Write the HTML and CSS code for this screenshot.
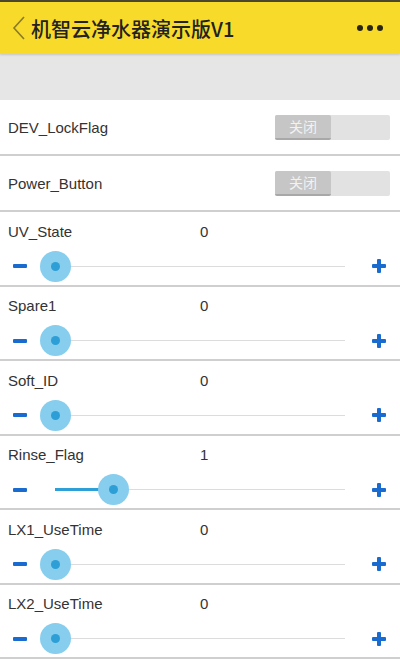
FILE: index.html
```html
<!DOCTYPE html>
<html lang="zh-CN">
<head>
  <meta charset="UTF-8" />
  <meta name="viewport" content="width=device-width, initial-scale=1.0" />
  <title>机智云净水器演示版V1</title>
  <link rel="stylesheet" href="styles.css">
</head>
<body>
  <div class="header">
    <svg class="back" width="14" height="26" viewBox="0 0 14 26">
      <path d="M12 2 L2 13 L12 24" fill="none" stroke="#8a7a2a" stroke-width="1.6" />
    </svg>
    <h1>机智云净水器演示版V1</h1>
    <div class="more"><span></span><span></span><span></span></div>
  </div>
  <div class="gap"></div>

  <div class="list">
    <div class="row toggle-row">
      <span class="label">DEV_LockFlag</span>
      <div class="switch"><span class="knob">关闭</span></div>
    </div>
    <div class="row toggle-row">
      <span class="label">Power_Button</span>
      <div class="switch"><span class="knob">关闭</span></div>
    </div>
  </div>

  <div class="list" id="sliders"></div>

  <script>
    const items = [
      ["UV_State", 0], ["Spare1", 0], ["Soft_ID", 0],
      ["Rinse_Flag", 1], ["LX1_UseTime", 0], ["LX2_UseTime", 0]
    ];
    const max = 5;
    const box = document.getElementById("sliders");
    items.forEach(([name, val]) => {
      const pct = (val / max) * 100;
      const row = document.createElement("div");
      row.className = "row slider-row";
      row.innerHTML = `
        <div class="top"><span class="label">${name}</span><span class="value">${val}</span></div>
        <div class="ctrl">
          <span class="minus"></span>
          <div class="track">
            <div class="fill" style="width:${pct}%"></div>
            <div class="thumb" style="left:${pct}%"></div>
          </div>
          <span class="plus"></span>
        </div>`;
      box.appendChild(row);
    });
  </script>
</body>
</html>
```

FILE: styles.css
```css
* {
  box-sizing: border-box;
}
body {
  margin: 0;
  background: #fff;
  font-family: 'Liberation Sans', Arial, 'Noto Sans CJK SC', sans-serif;
  color: #333;
}
.header {
  height: 54px;
  border-top: 2px solid #4a4630;
  background: #f7da2a;
  display: flex;
  align-items: center;
  padding: 0 17px 0 12px;
  box-shadow: 0 1px 2px rgba(0,0,0,0.15);
  position: relative;
}
.back {
  margin-right: 5px;
}
.header h1 {
  margin: 0;
  flex: 1;
  font-family: 'Noto Sans CJK SC', sans-serif;
  font-size: 20px;
  font-weight: 500;
  color: #222;
}
.more {
  display: flex;
  gap: 4px;
}
.more span {
  width: 6px;
  height: 6px;
  border-radius: 50%;
  background: #2a2510;
}
.gap {
  height: 46px;
  background: #e6e6e6;
}
.row {
  border-bottom: 2px solid #cfcfcf;
  padding: 0 8px;
}
.label {
  font-size: 15px;
  color: #333;
}
.toggle-row {
  height: 56px;
  display: flex;
  align-items: center;
  justify-content: space-between;
  padding-right: 10px;
}
.switch {
  width: 115px;
  height: 25px;
  background: #e2e2e2;
  border-radius: 2px;
  display: flex;
}
.knob {
  width: 56px;
  height: 25px;
  background: #c6c6c6;
  border-bottom: 2px solid #a8a8a8;
  border-radius: 2px;
  color: #f2f2f2;
  font-family: 'Noto Sans CJK SC', sans-serif;
  font-size: 14px;
  display: flex;
  align-items: center;
  justify-content: center;
}
.slider-row {
  height: 74.5px;
  padding-top: 9px;
}
.top {
  display: flex;
  height: 20px;
  align-items: center;
}
.top .label {
  width: 192px;
}
.value {
  font-size: 15px;
}
.ctrl {
  display: flex;
  align-items: center;
  height: 32px;
  margin-top: 9px;
}
.minus {
  width: 14px;
  height: 4px;
  background: #1a6bd0;
  border-radius: 1px;
  margin-left: 5px;
}
.track {
  position: relative;
  height: 1px;
  background: #dcdcdc;
  margin-left: 28px;
  width: 290px;
}
.fill {
  position: absolute;
  left: 0;
  top: -1px;
  height: 3px;
  background: #2f9fd8;
}
.thumb {
  position: absolute;
  top: 0;
  width: 31px;
  height: 31px;
  margin: -15px 0 0 -15px;
  border-radius: 50%;
  background: #86cdee;
}
.thumb::after {
  content: "";
  position: absolute;
  left: 11px;
  top: 11px;
  width: 9px;
  height: 9px;
  border-radius: 50%;
  background: #2d9fd6;
}
.plus {
  position: relative;
  width: 14px;
  height: 14px;
  margin-left: 27px;
}
.plus::before, .plus::after {
  content: "";
  position: absolute;
  background: #1a6bd0;
  border-radius: 1px;
}
.plus::before {
  left: 0;
  top: 5px;
  width: 14px;
  height: 4px;
}
.plus::after {
  left: 5px;
  top: 0;
  width: 4px;
  height: 14px;
}
```
